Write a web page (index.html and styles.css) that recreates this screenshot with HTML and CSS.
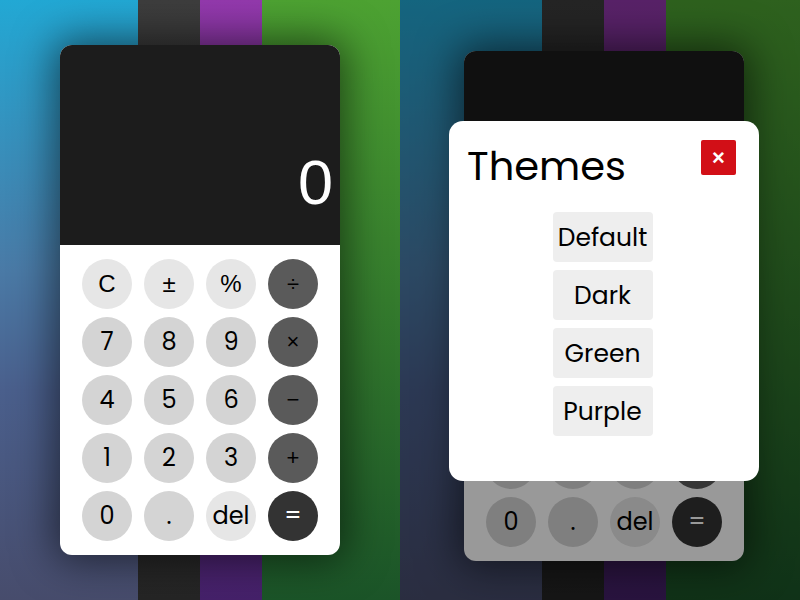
FILE: index.html
```html
<!DOCTYPE html>
<html lang="en">
<head>
<meta charset="utf-8">
<title>Calculator themes</title>
<link rel="stylesheet" href="styles.css">
</head>
<body>
<main class="scene">
  <section class="half">
    <div class="calc">
      <div class="display">0</div>
      <div class="keys">
        <button class="key fn">C</button>
        <button class="key fn">±</button>
        <button class="key fn">%</button>
        <button class="key op">÷</button>
        <button class="key num">7</button>
        <button class="key num">8</button>
        <button class="key num">9</button>
        <button class="key op">×</button>
        <button class="key num">4</button>
        <button class="key num">5</button>
        <button class="key num">6</button>
        <button class="key op">−</button>
        <button class="key num">1</button>
        <button class="key num">2</button>
        <button class="key num">3</button>
        <button class="key op">+</button>
        <button class="key num">0</button>
        <button class="key num">.</button>
        <button class="key del">del</button>
        <button class="key eq">=</button>
      </div>
    </div>
  </section>
  <section class="half half-modal">
    <div class="calc">
      <div class="display"></div>
      <div class="keys">
        <button class="key fn">C</button>
        <button class="key fn">±</button>
        <button class="key fn">%</button>
        <button class="key op">÷</button>
        <button class="key num">7</button>
        <button class="key num">8</button>
        <button class="key num">9</button>
        <button class="key op">×</button>
        <button class="key num">4</button>
        <button class="key num">5</button>
        <button class="key num">6</button>
        <button class="key op">−</button>
        <button class="key num">1</button>
        <button class="key num">2</button>
        <button class="key num">3</button>
        <button class="key op">+</button>
        <button class="key num">0</button>
        <button class="key num">.</button>
        <button class="key del">del</button>
        <button class="key eq">=</button>
      </div>
    </div>
    <div class="dim"></div>
    <div class="modal">
      <div class="modal-head">
        <h2 class="modal-title">Themes</h2>
        <button class="close">×</button>
      </div>
      <div class="themes">
        <button class="theme">Default</button>
        <button class="theme">Dark</button>
        <button class="theme">Green</button>
        <button class="theme">Purple</button>
      </div>
    </div>
  </section>
</main>
</body>
</html>
```
FILE: styles.css
```css
* { box-sizing: border-box; }
html, body { margin: 0; padding: 0; }
body {
  width: 800px;
  height: 600px;
  overflow: hidden;
  font-family: Poppins, "Open Sans", "Liberation Sans", sans-serif;
}
.scene {
  display: flex;
  width: 800px;
  height: 600px;
}
.half {
  position: relative;
  width: 400px;
  height: 600px;
  padding: 45px 0 0 60px;
  background:
    linear-gradient(#3d3d3d, #252525) 138px 0 / 62px 100% no-repeat,
    linear-gradient(#9339ad, #45216a) 200px 0 / 62px 100% no-repeat,
    linear-gradient(#4da232, #1b5428) 262px 0 / 138px 100% no-repeat,
    linear-gradient(#22a8d4 0%, #4a7aa6 45%, #4a5f8c 65%, #474c6c 100%) 0 0 / 138px 100% no-repeat;
}
.half-modal {
  padding: 51px 0 0 64px;
  background:
    linear-gradient(#3d3d3d, #252525) 142px 0 / 62px 100% no-repeat,
    linear-gradient(#9339ad, #45216a) 204px 0 / 62px 100% no-repeat,
    linear-gradient(#4da232, #1b5428) 266px 0 / 134px 100% no-repeat,
    linear-gradient(#22a8d4 0%, #4a7aa6 45%, #4a5f8c 65%, #474c6c 100%) 0 0 / 142px 100% no-repeat;
}
.calc {
  width: 280px;
  height: 510px;
  border-radius: 12px;
  overflow: hidden;
  background: #fff;
  box-shadow: 0 0 40px 6px rgba(0, 0, 0, 0.55);
}
.display {
  height: 200px;
  background: #1c1c1c;
  color: #fff;
  font-family: "Liberation Sans", Arial, sans-serif;
  font-size: 63px;
  line-height: 1;
  display: flex;
  justify-content: flex-end;
  align-items: flex-end;
  padding: 0 7px 31px 0;
}
.keys {
  display: grid;
  grid-template-columns: repeat(4, 50px);
  column-gap: 12px;
  row-gap: 8px;
  padding: 14px 22px;
}
.key {
  width: 50px;
  height: 50px;
  border: none;
  border-radius: 50%;
  padding: 0;
  font-family: Poppins, "Open Sans", "Liberation Sans", sans-serif;
  font-size: 24px;
  line-height: 1;
  color: #000;
  display: flex;
  align-items: center;
  justify-content: center;
}
.fn {
  background: #e6e6e6;
  font-family: "Liberation Sans", Arial, sans-serif;
  font-size: 24px;
}
.num { background: #d4d4d4; }
.del { background: #e6e6e6; }
.op { background: #5a5a5a; color: #000; font-family: "Liberation Sans", Arial, sans-serif; font-size: 22px; }
.eq { background: #333; color: #fff; }
.dim {
  position: absolute;
  inset: 0;
  background: rgba(0, 0, 0, 0.4);
}
.modal {
  position: absolute;
  left: 49px;
  top: 121px;
  width: 310px;
  height: 360px;
  background: #fff;
  border-radius: 14px;
  padding: 19px 23px 0 18px;
}
.modal-head {
  display: flex;
  justify-content: space-between;
  align-items: flex-start;
}
.modal-title {
  margin: 0;
  font-weight: 400;
  font-size: 40px;
  line-height: 52px;
  color: #000;
}
.close {
  width: 35px;
  height: 35px;
  border: none;
  border-radius: 2px;
  background: #d20f17;
  color: #fff;
  font-size: 22px;
  font-weight: 700;
  line-height: 1;
  padding: 0;
  font-family: "Liberation Sans", Arial, sans-serif;
}
.themes {
  display: flex;
  flex-direction: column;
  align-items: center;
  gap: 8px;
  margin-top: 20px;
  padding-left: 2px;
}
.theme {
  width: 100px;
  height: 50px;
  border: none;
  border-radius: 4px;
  background: #eee;
  color: #000;
  font-family: Poppins, "Open Sans", "Liberation Sans", sans-serif;
  font-size: 25px;
  line-height: 1;
  padding: 0;
}
```
